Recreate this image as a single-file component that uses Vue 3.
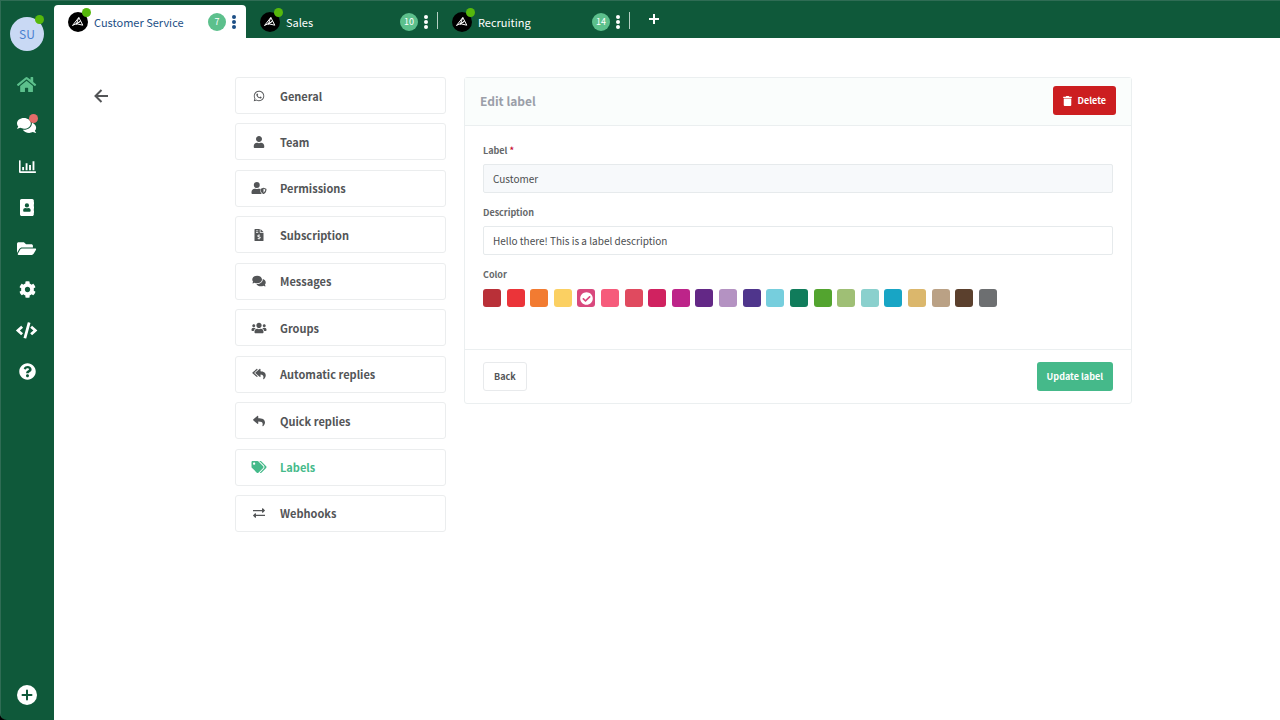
<template>
  <div class="app">
    <aside class="sidebar">
      <button class="avatar" aria-label="Account">SU<span class="status"></span></button>
      <nav class="side-nav" aria-label="Main">
        <a
          v-for="item in sideNav"
          :key="item.icon"
          href="#"
          :class="['side-link', { active: item.active }]"
          :aria-label="item.label"
        >
          <svg class="side-icon" :viewBox="icons[item.icon].box"><path :d="icons[item.icon].d" /></svg>
          <span v-if="item.alert" class="alert"></span>
        </a>
      </nav>
      <button class="side-add" aria-label="Add">
        <svg viewBox="0 0 20 20">
          <circle cx="10" cy="10" r="10" fill="#fff" />
          <path d="M10 5.5v9M5.5 10h9" stroke="#0f593a" stroke-width="2" stroke-linecap="round" />
        </svg>
      </button>
    </aside>

    <div class="workspace">
      <header class="tabs">
        <div v-for="tab in tabs" :key="tab.name" :class="['tab', { active: tab.active }]">
          <span class="logo">
            <svg viewBox="0 0 20 20">
              <path d="M4.500 13.500L10.800 5.500L14.800 13.200L8.800 11.800L12 9.500M4.500 13.500L12.600 9.300M8 13L10.800 5.500" />
            </svg>
            <span class="status"></span>
          </span>
          <a href="#" class="tab-name">{{ tab.name }}</a>
          <span class="count">{{ tab.count }}</span>
          <button class="tab-menu" :aria-label="tab.name + ' menu'">
            <svg viewBox="0 0 4 14">
              <circle cx="2" cy="2" r="2" /><circle cx="2" cy="7" r="2" /><circle cx="2" cy="12" r="2" />
            </svg>
          </button>
        </div>
        <button class="tab-add" aria-label="New tab">
          <svg viewBox="0 0 12 12"><path d="M6 1v10M1 6h10" /></svg>
        </button>
      </header>

      <main class="content">
        <a href="#" class="go-back" aria-label="Go back">
          <svg viewBox="0 0 14 14"><path d="M14 7H2M7.500 1L1.500 7L7.500 13" /></svg>
        </a>

        <nav class="menu" aria-label="Settings">
          <a
            v-for="item in menu"
            :key="item.label"
            href="#"
            :class="['menu-item', { active: item.active }]"
          >
            <svg class="menu-icon" :viewBox="icons[item.icon].box"><path :d="icons[item.icon].d" /></svg>
            <span>{{ item.label }}</span>
          </a>
        </nav>

        <form class="card" @submit.prevent>
          <div class="card-header">
            <h1>Edit label</h1>
            <button type="button" class="btn danger">
              <svg viewBox="0 0 448 512"><path :d="icons.trash.d" /></svg>
              Delete
            </button>
          </div>

          <div class="card-body">
            <label for="label-name">Label <span class="required">*</span></label>
            <input id="label-name" v-model="name" type="text" class="field" readonly />
            <label for="label-description">Description</label>
            <input id="label-description" v-model="description" type="text" class="field" />
            <fieldset>
              <legend>Color</legend>
              <div class="swatches">
                <label v-for="color in colors" :key="color" class="swatch" :style="{ background: color }">
                  <input v-model="selected" type="radio" name="color" :value="color" :aria-label="color" />
                  <svg v-if="selected === color" viewBox="0 0 512 512"><path :d="icons.check.d" /></svg>
                </label>
              </div>
            </fieldset>
          </div>

          <div class="card-footer">
            <button type="button" class="btn plain">Back</button>
            <button type="submit" class="btn primary">Update label</button>
          </div>
        </form>
      </main>
    </div>
  </div>
</template>

<script setup>
import { ref } from "vue"

const name = ref("Customer")
const description = ref("Hello there! This is a label description")
const selected = ref("#d9487d")

const tabs = [
  { name: "Customer Service", count: 7, active: true },
  { name: "Sales", count: 10 },
  { name: "Recruiting", count: 14 }
]

const sideNav = [
  { icon: "home", label: "Home", active: true },
  { icon: "comments", label: "Chats", alert: true },
  { icon: "chart", label: "Statistics" },
  { icon: "book", label: "Contacts" },
  { icon: "folder", label: "Files" },
  { icon: "cog", label: "Settings" },
  { icon: "code", label: "Developers" },
  { icon: "question", label: "Help" }
]

const menu = [
  { icon: "whatsapp", label: "General" },
  { icon: "user", label: "Team" },
  { icon: "userShield", label: "Permissions" },
  { icon: "invoice", label: "Subscription" },
  { icon: "comments", label: "Messages" },
  { icon: "users", label: "Groups" },
  { icon: "replyAll", label: "Automatic replies" },
  { icon: "reply", label: "Quick replies" },
  { icon: "tags", label: "Labels", active: true },
  { icon: "exchange", label: "Webhooks" }
]

const colors = [
  "#b93038", "#eb3439", "#f27b31", "#fbd062", "#d9487d", "#f65b7b", "#e04a5f", "#d02260",
  "#bd2489", "#632886", "#b492c2", "#4f358c", "#76cedd", "#107c5b", "#53a42f", "#9fbf75",
  "#8ad0cd", "#18a5c5", "#dbb76c", "#baa185", "#5b402d", "#6d6f71"
]

const icons = {
  home: {
    box: "0 0 576 512",
    d: "M280.37 148.26L96 300.11V464a16 16 0 0 0 16 16l112.06-.29a16 16 0 0 0 15.92-16V368a16 16 0 0 1 16-16h64a16 16 0 0 1 16 16v95.64a16 16 0 0 0 16 16.05L464 480a16 16 0 0 0 16-16V300L295.67 148.26a12.19 12.19 0 0 0-15.3 0zM571.6 251.47L488 182.56V44.05a12 12 0 0 0-12-12h-56a12 12 0 0 0-12 12v72.61L318.47 43a48 48 0 0 0-61 0L4.34 251.47a12 12 0 0 0-1.6 16.9l25.5 31A12 12 0 0 0 45.15 301l235.22-193.74a12.19 12.19 0 0 1 15.3 0L530.9 301a12 12 0 0 0 16.9-1.6l25.5-31a12 12 0 0 0-1.7-16.93z"
  },
  comments: {
    box: "0 0 576 512",
    d: "M416 192c0-88.4-93.1-160-208-160S0 103.6 0 192c0 34.3 14.1 65.9 38 92-13.4 30.2-35.5 54.2-35.8 54.5-2.2 2.3-2.8 5.7-1.5 8.7S4.8 352 8 352c36.600 0 66.900-12.300 88.700-25 32.200 15.700 70.300 25 111.300 25 114.900 0 208-71.600 208-160zm122 220c23.900-26 38-57.700 38-92 0-66.900-53.500-124.200-129.300-148.100.9 6.600 1.300 13.300 1.300 20.100 0 105.900-107.700 192-240 192-10.800 0-21.300-.8-31.700-1.900C207.800 439.600 281.800 480 368 480c41 0 79.100-9.200 111.300-25 21.800 12.700 52.100 25 88.700 25 3.200 0 6.100-1.900 7.300-4.800 1.300-2.900.7-6.300-1.500-8.700-.3-.3-22.400-24.200-35.800-54.500z"
  },
  chart: {
    box: "0 0 512 512",
    d: "M0 80a16 16 0 0 1 16-16h16a16 16 0 0 1 16 16v320h448a16 16 0 0 1 16 16v16a16 16 0 0 1-16 16H24a24 24 0 0 1-24-24zM96 272h56v96H96zM200 160h56v208h-56zM304 208h56v160h-56zM408 96h56v272h-56z"
  },
  book: {
    box: "0 0 448 512",
    d: "M48 0h320c26 0 48 22 48 48v48h20c7 0 12 5 12 12v40c0 7-5 12-12 12h-20v64h20c7 0 12 5 12 12v40c0 7-5 12-12 12h-20v64h20c7 0 12 5 12 12v40c0 7-5 12-12 12h-20v48c0 26-22 48-48 48H48c-26 0-48-22-48-48V48C0 22 22 0 48 0zM208 128a64 64 0 1 0 0 128a64 64 0 1 0 0-128zM164 272c-38 0-68 28-68 62v26c0 13 10 24 24 24h176c14 0 24-11 24-24v-26c0-34-30-62-68-62c-28 12-60 12-88 0z"
  },
  folder: {
    box: "0 0 576 512",
    d: "M572.694 292.093L500.27 416.248A63.997 63.997 0 0 1 444.989 448H45.025c-18.523 0-30.064-20.093-20.731-36.093l72.424-124.155A64 64 0 0 1 152 256h399.964c18.523 0 30.064 20.093 20.73 36.093zM152 224h328v-48c0-26.51-21.49-48-48-48H272l-64-64H48C21.49 64 0 85.49 0 112v278.046l69.077-118.418C86.214 242.25 117.989 224 152 224z"
  },
  cog: {
    box: "0 0 512 512",
    d: "M487.4 315.7l-42.6-24.6c4.3-23.2 4.3-47 0-70.2l42.6-24.6c4.9-2.8 7.1-8.6 5.5-14-11.1-35.6-30-67.8-54.7-94.6-3.8-4.1-10-5.1-14.8-2.3L380.8 110c-17.9-15.4-38.5-27.3-60.8-35.1V25.8c0-5.6-3.9-10.5-9.4-11.7-36.7-8.2-74.3-7.8-109.2 0-5.5 1.2-9.4 6.1-9.4 11.7V75c-22.2 7.9-42.8 19.8-60.8 35.1L88.7 85.5c-4.9-2.8-11-1.9-14.8 2.3-24.7 26.7-43.6 58.9-54.7 94.6-1.7 5.4.6 11.2 5.5 14L67.3 221c-4.3 23.2-4.3 47 0 70.2l-42.6 24.6c-4.9 2.8-7.1 8.6-5.5 14 11.1 35.6 30 67.8 54.7 94.6 3.8 4.1 10 5.1 14.8 2.3l42.6-24.6c17.9 15.4 38.5 27.3 60.8 35.1v49.2c0 5.6 3.9 10.5 9.4 11.7 36.7 8.2 74.3 7.8 109.2 0 5.5-1.2 9.4-6.1 9.4-11.7v-49.2c22.2-7.9 42.8-19.8 60.8-35.1l42.6 24.6c4.9 2.8 11 1.9 14.8-2.3 24.7-26.7 43.6-58.9 54.7-94.6 1.5-5.5-.7-11.3-5.6-14.1zM256 336c-44.1 0-80-35.9-80-80s35.9-80 80-80 80 35.9 80 80-35.9 80-80 80z"
  },
  code: {
    box: "0 0 640 512",
    d: "M368 8l58 17c7 2 10 8 8 15L310 492c-2 7-8 10-15 8l-58-17c-7-2-10-8-8-15L353 16c2-7 8-10 15-8zM164 118l42 44c5 5 4 13-1 17L116 256l89 77c5 4 6 12 1 17l-42 44c-4 5-12 5-17 1L4 265c-5-5-5-13 0-18l143-130c5-4 13-4 17 1zM476 118l-42 44c-5 5-4 13 1 17l89 77l-89 77c-5 4-6 12-1 17l42 44c4 5 12 5 17 1l143-130c5-5 5-13 0-18L493 117c-5-4-13-4-17 1z"
  },
  question: {
    box: "0 0 512 512",
    d: "M504 256c0 136.997-111.043 248-248 248S8 392.997 8 256C8 119.083 119.043 8 256 8s248 111.083 248 248zM262.655 90c-54.497 0-89.255 22.957-116.549 63.758-3.536 5.286-2.353 12.415 2.715 16.258l34.699 26.31c5.205 3.947 12.621 3.008 16.665-2.122 17.864-22.658 30.113-35.797 57.303-35.797 20.429 0 45.698 13.148 45.698 32.958 0 14.976-12.363 22.667-32.534 33.976C247.128 238.528 216 254.941 216 296v4c0 6.627 5.373 12 12 12h56c6.627 0 12-5.373 12-12v-1.333c0-28.462 83.186-29.647 83.186-106.667 0-58.002-60.165-102-116.531-102zM256 338c-25.365 0-46 20.635-46 46 0 25.364 20.635 46 46 46s46-20.636 46-46c0-25.365-20.635-46-46-46z"
  },
  whatsapp: {
    box: "0 0 448 512",
    d: "M380.9 97.1C339 55.1 283.2 32 223.9 32c-122.4 0-222 99.6-222 222 0 39.1 10.2 77.3 29.6 111L0 480l117.7-30.9c32.4 17.7 68.9 27 106.1 27h.1c122.3 0 224.1-99.6 224.1-222 0-59.3-25.2-115-67.1-157zm-157 341.6c-33.2 0-65.7-8.9-94-25.7l-6.7-4-69.8 18.3L72 359.2l-4.4-7c-18.5-29.4-28.2-63.3-28.2-98.2 0-101.7 82.8-184.5 184.6-184.5 49.3 0 95.6 19.2 130.4 54.1 34.8 34.9 56.2 81.2 56.1 130.5 0 101.8-84.9 184.6-186.6 184.6zm101.2-138.2c-5.5-2.8-32.8-16.2-37.9-18-5.1-1.9-8.8-2.8-12.5 2.8-3.7 5.6-14.3 18-17.6 21.8-3.2 3.7-6.5 4.2-12 1.4-32.6-16.3-54-29.1-75.5-66-5.7-9.8 5.7-9.1 16.3-30.3 1.8-3.7.9-6.9-.5-9.7-1.4-2.8-12.5-30.1-17.1-41.2-4.5-10.8-9.1-9.3-12.5-9.5-3.2-.2-6.9-.2-10.6-.2-3.7 0-9.7 1.4-14.8 6.9-5.1 5.6-19.4 19-19.4 46.3 0 27.3 19.9 53.7 22.6 57.4 2.8 3.7 39.1 59.7 94.8 83.8 35.2 15.2 49 16.5 66.6 13.9 10.7-1.6 32.8-13.4 37.4-26.4 4.6-13 4.6-24.1 3.2-26.4-1.3-2.5-5-3.9-10.5-6.6z"
  },
  user: {
    box: "0 0 448 512",
    d: "M224 256c70.7 0 128-57.3 128-128S294.7 0 224 0 96 57.3 96 128s57.3 128 128 128zm89.6 32h-16.7c-22.2 10.2-46.9 16-72.9 16s-50.6-5.8-72.9-16h-16.7C60.2 288 0 348.2 0 422.4V464c0 26.5 21.5 48 48 48h352c26.5 0 48-21.5 48-48v-41.6c0-74.2-60.2-134.4-134.4-134.4z"
  },
  userShield: {
    box: "0 0 640 512",
    d: "M224 0a128 128 0 1 0 0 256a128 128 0 1 0 0-256zM134 288h33c36 20 78 20 114 0h33c20 0 38 4 55 12c0 78 14 160 72 212H48c-26 0-48-22-48-48v-42c0-74 60-134 134-134zM512 240l116 48c8 3 12 10 12 18c0 92-48 170-116 204c-8 3-16 3-24 0c-60-30-116-100-116-204c0-8 4-15 12-18zM512 292v166c44-26 74-78 78-134z"
  },
  invoice: {
    box: "0 0 384 512",
    d: "M24 0h200v136c0 13 11 24 24 24h136v328c0 13-11 24-24 24H24c-13 0-24-11-24-24V24C0 11 11 0 24 0zM256 0l128 128H256zM64 64v32h96V64zM64 128v32h96v-32zM176 220v26c-34 4-56 26-56 54c0 66 94 42 94 72c0 16-36 22-66 2l-22 26c14 12 32 18 50 20v28h32v-28c34-6 56-26 56-54c0-68-96-44-96-72c0-16 34-18 58-2l22-26c-12-9-26-15-40-18v-28z"
  },
  users: {
    box: "0 0 640 512",
    d: "M96 224c35.3 0 64-28.7 64-64s-28.7-64-64-64-64 28.7-64 64 28.7 64 64 64zm448 0c35.3 0 64-28.7 64-64s-28.7-64-64-64-64 28.7-64 64 28.7 64 64 64zm32 32h-64c-17.6 0-33.5 7.1-45.1 18.6 40.3 22.1 68.9 62 75.1 109.4h66c17.7 0 32-14.3 32-32v-32c0-35.3-28.7-64-64-64zm-256 0c61.9 0 112-50.1 112-112S381.9 32 320 32 208 82.1 208 144s50.1 112 112 112zm76.8 32h-8.3c-20.8 10-43.9 16-68.5 16s-47.6-6-68.5-16h-8.3C179.6 288 128 339.6 128 403.2V432c0 26.5 21.5 48 48 48h288c26.5 0 48-21.5 48-48v-28.8c0-63.6-51.6-115.2-115.2-115.2zm-223.7-13.4C161.5 263.1 145.6 256 128 256H64c-35.3 0-64 28.7-64 64v32c0 17.7 14.3 32 32 32h65.9c6.3-47.4 34.9-87.3 75.2-109.4z"
  },
  replyAll: {
    box: "0 0 576 512",
    d: "M136.309 189.836L312.313 37.851C327.72 24.546 352 35.348 352 56.015v82.763c129.182 10.231 224 52.212 224 183.548 0 61.441-39.582 122.309-83.333 154.132-13.653 9.931-33.111-2.533-28.077-18.631 38.512-123.162-3.922-169.482-112.59-182.015v84.175c0 20.701-24.3 31.453-39.687 18.164L136.309 226.164c-11.071-9.561-11.086-26.753 0-36.328zm-128 36.328L184.313 378.15C199.7 391.439 224 380.687 224 359.987v-15.818l-108.606-93.786A55.96 55.96 0 0 1 96 207.998a55.953 55.953 0 0 1 19.393-42.38L224 71.832V56.015c0-20.667-24.28-31.469-39.687-18.164L8.309 189.836c-11.086 9.575-11.071 26.767 0 36.328z"
  },
  reply: {
    box: "0 0 512 512",
    d: "M8.309 189.836L184.313 37.851C199.719 24.546 224 35.347 224 56.015v80.053c160.629 1.839 288 34.032 288 186.258 0 61.441-39.581 122.309-83.333 154.132-13.653 9.931-33.111-2.533-28.077-18.631 45.344-145.012-21.507-183.51-176.59-185.742V360c0 20.7-24.3 31.453-39.687 18.164l-176.004-152c-11.071-9.562-11.086-26.753 0-36.328z"
  },
  tags: {
    box: "0 0 640 512",
    d: "M497.941 225.941L286.059 14.059A48 48 0 0 0 252.118 0H48C21.49 0 0 21.49 0 48v204.118a48 48 0 0 0 14.059 33.941l211.882 211.882c18.744 18.745 49.136 18.746 67.882 0l204.118-204.118c18.745-18.745 18.745-49.137 0-67.882zM112 160c-26.51 0-48-21.49-48-48s21.49-48 48-48 48 21.49 48 48-21.49 48-48 48zm513.941 133.823L421.823 497.941c-18.745 18.745-49.137 18.745-67.882 0l-.36-.36L527.64 323.522c16.999-16.999 26.362-39.6 26.362-63.64s-9.362-46.641-26.362-63.64L331.397 0h48.721a48 48 0 0 1 33.941 14.059l211.882 211.882c18.745 18.745 18.745 49.137 0 67.882z"
  },
  exchange: {
    box: "0 0 512 512",
    d: "M0 128h384V72c0-20 24-30 38-16l84 80c8 8 8 20 0 28l-84 80c-14 14-38 4-38-16v-44H0zM512 328H128v-44c0-20-24-30-38-16L6 348c-8 8-8 20 0 28l84 80c14 14 38 4 38-16v-56h384z"
  },
  trash: {
    box: "0 0 448 512",
    d: "M32 464a48 48 0 0 0 48 48h288a48 48 0 0 0 48-48V128H32zM432 32H312l-9.4-18.7A24 24 0 0 0 281.1 0H166.8a23.72 23.72 0 0 0-21.4 13.3L136 32H16A16 16 0 0 0 0 48v32a16 16 0 0 0 16 16h416a16 16 0 0 0 16-16V48a16 16 0 0 0-16-16z"
  },
  check: {
    box: "0 0 512 512",
    d: "M504 256c0 136.967-111.033 248-248 248S8 392.967 8 256 119.033 8 256 8s248 111.033 248 248zM227.314 387.314l184-184c6.248-6.248 6.248-16.379 0-22.627l-22.627-22.627c-6.248-6.249-16.379-6.249-22.628 0L216 308.118l-70.059-70.059c-6.248-6.248-16.379-6.248-22.628 0l-22.627 22.627c-6.248 6.248-6.248 16.379 0 22.627l104 104c6.249 6.249 16.379 6.249 22.628.001z"
  }
}
</script>

<style>
body {
  background: #000;
}
</style>

<style scoped>
.app {
  display: flex;
  min-height: 100vh;
  font-family: "Noto Sans CJK SC", "Noto Sans", sans-serif;
  font-size: 11px;
  line-height: 16px;
  color: #535557;
}

.app * {
  box-sizing: border-box;
}

svg {
  display: block;
  fill: currentColor;
  fill-rule: evenodd;
}

button {
  padding: 0;
  border: 0;
  background: none;
  color: inherit;
  font: inherit;
  cursor: pointer;
}

a {
  color: inherit;
  text-decoration: none;
}

/* sidebar */
.sidebar {
  display: flex;
  flex-direction: column;
  align-items: center;
  flex: none;
  width: 54px;
  padding: 17px 0 15px;
  background: #0f593a;
  box-shadow: inset 1px 1px #2f6c54;
  border-bottom-left-radius: 7px;
  color: #fff;
}

.avatar {
  position: relative;
  width: 34px;
  height: 34px;
  border-radius: 50%;
  background: #c9d9f4;
  color: #4a7fd0;
  font-size: 12px;
}

.status {
  position: absolute;
  top: -2px;
  right: 0;
  width: 9px;
  height: 9px;
  border-radius: 50%;
  background: #56b80c;
}

.side-nav {
  display: flex;
  flex-direction: column;
  margin-top: 13px;
}

.side-link {
  position: relative;
  display: flex;
  align-items: center;
  justify-content: center;
  width: 24px;
  height: 41px;
}

.side-link.active {
  color: #5cc08c;
}

.side-icon {
  width: auto;
  height: 17px;
}

.alert {
  position: absolute;
  top: 9px;
  right: 1px;
  width: 9px;
  height: 9px;
  border-radius: 50%;
  background: #e36c69;
}

.side-add {
  margin-top: auto;
}

.side-add svg {
  width: 20px;
  height: 20px;
}

/* tabs */
.workspace {
  flex: 1;
  min-width: 0;
  background: #fff;
}

.tabs {
  display: flex;
  height: 38px;
  padding-top: 4px;
  background: #0f593a;
  border-top: 1px solid #2f6c54;
  color: #fff;
}

.tab {
  position: relative;
  display: flex;
  align-items: center;
  width: 192px;
  padding: 0 10px 0 14px;
}

.tab.active {
  background: #fff;
  border-radius: 4px 4px 0 0;
  color: #1c4f86;
}

.tab:not(.active)::after {
  content: "";
  position: absolute;
  top: 7px;
  right: 0;
  width: 1px;
  height: 17px;
  background: #b5cfc3;
}

.logo {
  position: relative;
  width: 20px;
  height: 20px;
  margin-right: 6px;
  border-radius: 50%;
  background: #000;
}

.logo svg {
  width: 20px;
  height: 20px;
  fill: none;
  stroke: #fff;
  stroke-width: 1;
}

.logo .status {
  top: -4px;
  right: -3px;
}

.tab-name {
  flex: 1;
  font-size: 11px;
}

.count {
  width: 18px;
  height: 18px;
  margin-right: 6px;
  border-radius: 9px;
  background: #5cc08c;
  color: #fff;
  font-size: 9px;
  line-height: 18px;
  text-align: center;
}

.tab-menu svg {
  width: 4px;
  height: 14px;
}

.tab-add {
  width: 48px;
  height: 28px;
}

.tab-add svg {
  width: 12px;
  height: 12px;
  margin: 0 auto;
  stroke: currentColor;
  stroke-width: 2;
}

/* page */
.content {
  display: grid;
  grid-template-columns: 123px 211px 1fr;
  column-gap: 18px;
  align-items: start;
  padding: 39px 148px 40px 40px;
}

.go-back {
  padding-top: 12px;
}

.go-back svg {
  width: 14px;
  height: 14px;
  fill: none;
  stroke: currentColor;
  stroke-width: 2;
}

.menu {
  display: flex;
  flex-direction: column;
  justify-content: space-between;
  min-height: 455px;
}

.menu-item {
  display: flex;
  align-items: center;
  gap: 13px;
  height: 37px;
  padding-left: 15px;
  border: 1px solid #ebedee;
  border-radius: 3px;
  font-size: 11px;
  font-weight: 700;
}

.menu-item.active {
  color: #45ba8a;
}

.menu-icon {
  width: 16px;
  height: 12px;
}

/* card */
.card {
  border: 1px solid #ebeff0;
  border-radius: 3px;
}

.card-header {
  display: flex;
  align-items: center;
  justify-content: space-between;
  height: 48px;
  padding: 0 15px 2px;
  background: #fafdfc;
  border-bottom: 1px solid #ebeff0;
}

h1 {
  margin: 0;
  color: #9b9fa9;
  font-size: 12px;
  font-weight: 700;
}

.btn {
  display: flex;
  align-items: center;
  gap: 6px;
  height: 29px;
  padding: 0 10px;
  border-radius: 3px;
  font-size: 9px;
  font-weight: 700;
}

.danger {
  background: #cc1e20;
  color: #fff;
}

.danger svg {
  width: 9px;
  height: 10px;
}

.plain {
  border: 1px solid #e8eaec;
}

.primary {
  background: #45b98a;
  color: #fff;
}

.card-body {
  padding: 17px 18px 42px;
}

.card-body > label,
legend {
  display: block;
  padding: 0;
  margin-bottom: 5px;
  color: #66686a;
  font-size: 9px;
  font-weight: 700;
}

.required {
  color: #c8102e;
}

.field {
  display: block;
  width: 100%;
  height: 29px;
  margin-bottom: 12px;
  padding: 0 9px;
  border: 1px solid #e6eaec;
  border-radius: 2px;
  outline: none;
  background: #fff;
  color: #4b4d4f;
  font: inherit;
  font-size: 10px;
}

.field:read-only {
  background: #f7f9fb;
}

fieldset {
  margin: 0;
  padding: 0;
  border: 0;
}

legend {
  margin-bottom: 6px;
}

.swatches {
  display: flex;
  justify-content: space-between;
  max-width: 514px;
}

.swatch {
  display: flex;
  align-items: center;
  justify-content: center;
  width: 18px;
  height: 18px;
  border-radius: 3px;
  color: #fff;
  cursor: pointer;
}

.swatch input {
  appearance: none;
  position: absolute;
  margin: 0;
  width: 18px;
  height: 18px;
  cursor: pointer;
}

.swatch svg {
  width: 13px;
  height: 13px;
}

.card-footer {
  display: flex;
  align-items: center;
  justify-content: space-between;
  padding: 12px 18px;
  border-top: 1px solid #ebeff0;
}
</style>
